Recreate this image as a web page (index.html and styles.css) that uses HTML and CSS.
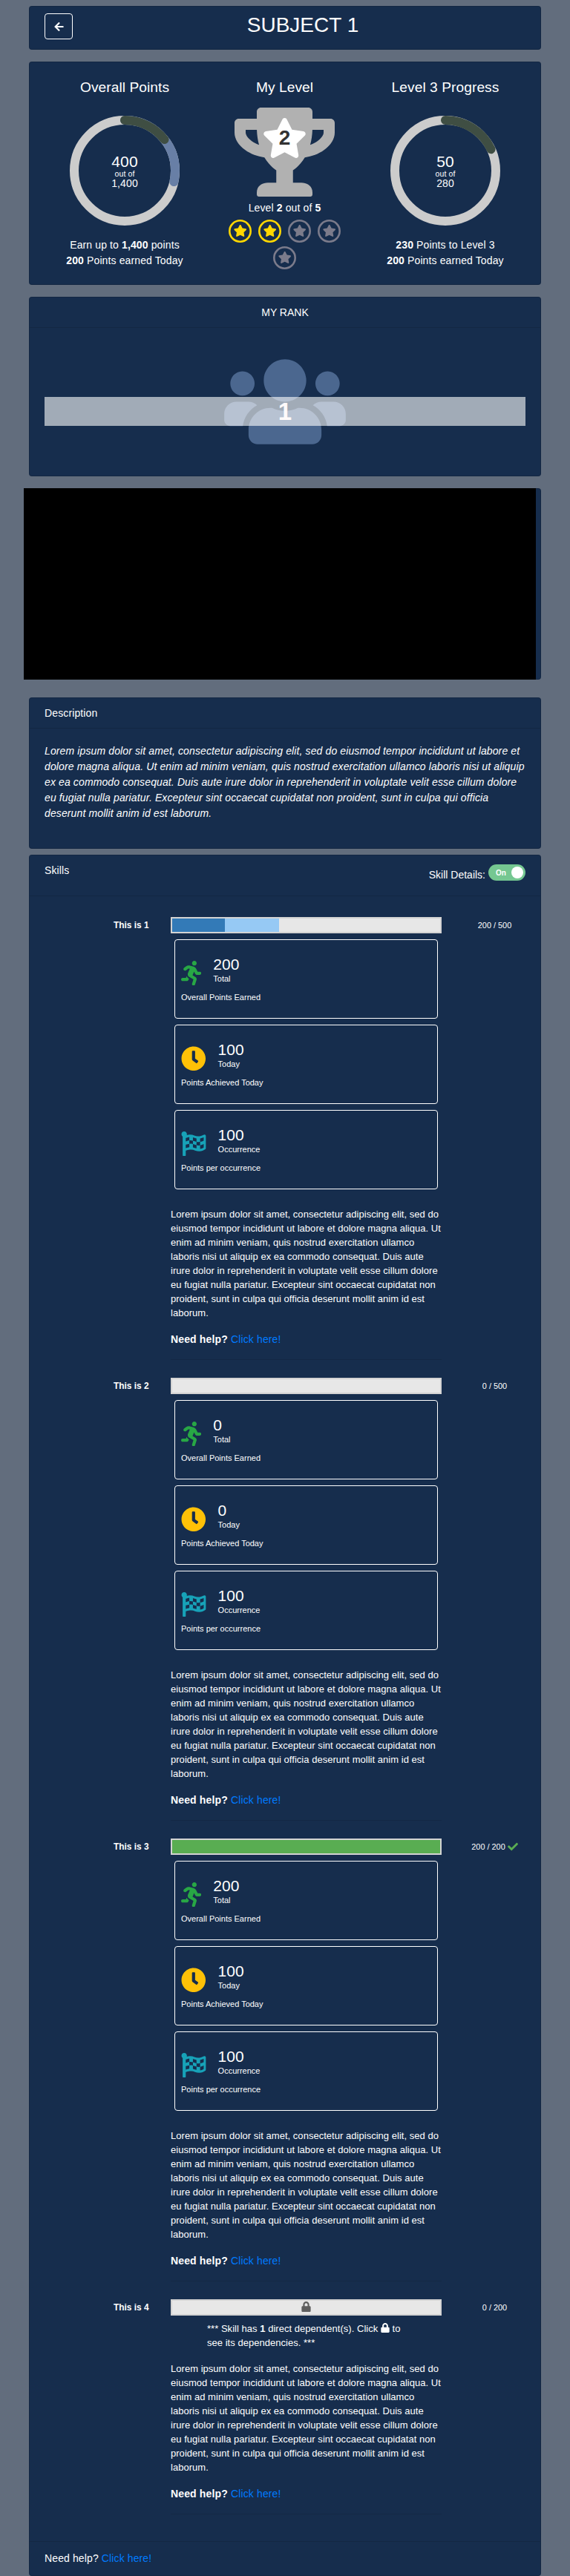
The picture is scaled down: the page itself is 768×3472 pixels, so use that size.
FILE: index.html
```html
<!DOCTYPE html>
<html lang="en">
<head>
<meta charset="utf-8">
<title>Subject 1</title>
<link rel="stylesheet" href="styles.css">
</head>
<body>
<svg class="sprite" xmlns="http://www.w3.org/2000/svg">
  <symbol id="arrow" viewBox="0 0 448 512"><path d="M257.5 445.1l-22.2 22.2c-9.4 9.4-24.6 9.4-33.9 0L7 273c-9.4-9.4-9.4-24.6 0-33.9L201.4 44.7c9.4-9.4 24.6-9.4 33.9 0l22.2 22.2c9.5 9.5 9.3 25-.4 34.3L136.6 216H424c13.3 0 24 10.7 24 24v32c0 13.3-10.7 24-24 24H136.6l120.5 114.8c9.8 9.3 10 24.8.4 34.3z"/></symbol>
  <symbol id="trophy" viewBox="0 0 576 512"><path d="M552 64H448V24c0-13.3-10.7-24-24-24H152c-13.3 0-24 10.7-24 24v40H24C10.7 64 0 74.7 0 88v56c0 35.7 22.5 72.4 61.9 100.7 31.5 22.7 69.8 37.1 110 41.7C203.3 338.5 240 360 240 360v72h-48c-35.3 0-64 20.7-64 56v12c0 6.6 5.4 12 12 12h296c6.600 0 12-5.400 12-12v-12c0-35.300-28.700-56-64-56h-48v-72s36.700-21.500 68.100-73.600c40.300-4.600 78.600-19 110-41.700 39.300-28.300 61.900-65 61.900-100.700V88c0-13.300-10.700-24-24-24zM99.300 192.800C74.900 175.200 64 155.600 64 144v-16h64.200c1 32.600 5.800 61.200 12.800 86.200-15.100-5.200-29.200-12.400-41.700-21.400zM512 144c0 16.100-17.700 36.100-35.300 48.800-12.500 9-26.700 16.200-41.800 21.400 7-25 11.800-53.600 12.800-86.200H512v16z"/></symbol>
  <symbol id="star" viewBox="0 0 576 512"><path d="M259.3 17.8L194 150.2 47.9 171.5c-26.2 3.8-36.7 36.1-17.7 54.6l105.7 103-25 145.5c-4.5 26.3 23.2 46 46.4 33.7L288 439.6l130.7 68.7c23.2 12.2 50.9-7.4 46.4-33.7l-25-145.5 105.7-103c19-18.5 8.5-50.8-17.7-54.6L382 150.2 316.7 17.8c-11.7-23.6-45.6-23.9-57.4 0z"/></symbol>
  <symbol id="badge" viewBox="0 0 31 31"><circle cx="15.500" cy="15.500" r="14.200" fill="none" stroke="currentColor" stroke-width="2.600"/><use href="#star" x="6.700" y="6.900" width="18" height="16"/></symbol>
  <symbol id="users" viewBox="0 0 640 512"><path d="M96 224c35.3 0 64-28.7 64-64s-28.7-64-64-64-64 28.7-64 64 28.7 64 64 64zm448 0c35.3 0 64-28.7 64-64s-28.7-64-64-64-64 28.7-64 64 28.7 64 64 64zm32 32h-64c-17.6 0-33.5 7.1-45.1 18.6 40.3 22.1 68.9 62 75.1 109.4h66c17.7 0 32-14.3 32-32v-32c0-35.3-28.7-64-64-64zm-256 0c61.9 0 112-50.1 112-112S381.9 32 320 32 208 82.1 208 144s50.1 112 112 112zm76.8 32h-8.3c-20.8 10-43.9 16-68.5 16s-47.6-6-68.5-16h-8.3C179.6 288 128 339.6 128 403.2V432c0 26.5 21.5 48 48 48h288c26.5 0 48-21.5 48-48v-28.8c0-63.6-51.6-115.2-115.2-115.2zm-223.7-13.4C161.5 263.1 145.6 256 128 256H64c-35.3 0-64 28.7-64 64v32c0 17.7 14.3 32 32 32h65.9c6.3-47.4 34.9-87.3 75.2-109.4z"/></symbol>
  <symbol id="run" viewBox="0 0 416 512"><path d="M272 96c26.51 0 48-21.49 48-48S298.51 0 272 0s-48 21.49-48 48 21.49 48 48 48zM113.69 317.47l-14.8 34.52H32c-17.67 0-32 14.33-32 32s14.33 32 32 32h77.45c19.25 0 36.58-11.44 44.11-29.09l8.79-20.52-10.67-6.3c-17.32-10.23-30.06-25.37-37.99-42.61zM384 223.99h-44.03l-26.06-53.25c-12.5-25.55-35.45-44.23-61.78-50.94l-71.08-21.14c-28.3-6.8-57.77-.55-80.84 17.14l-39.67 30.41c-14.03 10.75-16.69 30.83-5.94 44.86s30.84 16.69 44.86 5.94l39.66-30.41c7.67-5.89 17.44-8 25.27-6.14l14.7 4.37-37.46 87.39c-12.62 29.48-1.31 64.01 26.3 80.31l84.98 50.17-27.47 87.73c-5.28 16.86 4.11 34.82 20.97 40.09 3.19 1 6.41 1.48 9.58 1.48 13.61 0 26.23-8.77 30.52-22.45l31.64-101.06c5.91-20.77-2.89-43.08-21.64-54.39l-61.24-36.14 31.31-78.28 20.27 41.43c8 16.34 24.92 26.89 43.11 26.89H384c17.67 0 32-14.33 32-32s-14.33-31.99-32-31.99z"/></symbol>
  <symbol id="clock" viewBox="0 0 512 512"><path d="M256,8C119,8,8,119,8,256S119,504,256,504,504,393,504,256,393,8,256,8Zm92.49,313h0l-20,25a16,16,0,0,1-22.49,2.5h0l-67-49.72a40,40,0,0,1-15-31.23V112a16,16,0,0,1,16-16h32a16,16,0,0,1,16,16V256l58,42.5A16,16,0,0,1,348.49,321Z"/></symbol>
  <symbol id="flag" viewBox="0 0 512 512"><path d="M243.2 189.9V258c26.1 5.9 49.3 15.6 73.6 22.3v-68.2c-26-5.8-49.4-15.500-73.6-22.2zm223.3-123c-34.3 15.9-76.5 31.9-117 31.9C296 98.8 251.7 64 184.3 64c-25 0-47.3 4.4-68 12 2.8-7.3 4.1-15.2 3.6-23.6C118.1 24 94.8 1.2 66.3 0 34.3-1.3 8 24.3 8 56c0 19 9.5 35.8 24 45.9V488c0 13.3 10.7 24 24 24h16c13.3 0 24-10.7 24-24v-94.4c28.3-12.1 63.6-22.1 114.4-22.1 53.6 0 97.8 34.8 165.2 34.8 48.2 0 86.7-16.3 122.5-40.9 8.7-6 13.8-15.8 13.8-26.4V95.9c.1-23.3-24.2-38.8-45.4-29zM169.6 325.5c-25.8 2.7-50 8.2-73.6 16.6v-70.5c26.2-9.3 47.5-15 73.6-17.4v71.3zM464 191c-23.6 9.8-46.3 19.5-73.6 23.9V286c24.8-3.4 51.4-11.8 73.6-26v70.5c-25.1 16.1-48.5 24.7-73.6 27.1V286c-27 3.7-47.9 1.5-73.6-5.6v67.4c-23.9-7.4-47.3-16.7-73.6-21.3V258c-19.7-4.4-40.8-6.8-73.6-3.8v-70c-22.4 3.1-44.6 10.2-73.6 20.9v-70.5c33.2-12.2 50.1-19.8 73.6-22v71.6c27-3.7 48.4-1.3 73.6 5.700v-67.4c23.7 7.4 47.2 16.7 73.6 21.3v68.4c23.7 5.3 47.6 6.9 73.6 2.7V143c27-4.8 52.3-13.6 73.6-22.5z"/></symbol>
  <symbol id="lock" viewBox="0 0 448 512"><path d="M400 224h-24v-72C376 68.2 307.8 0 224 0S72 68.2 72 152v72H48c-26.5 0-48 21.5-48 48v192c0 26.5 21.5 48 48 48h352c26.5 0 48-21.5 48-48V272c0-26.5-21.5-48-48-48zm-104 0H152v-72c0-39.7 32.3-72 72-72s72 32.3 72 72v72z"/></symbol>
  <symbol id="check" viewBox="0 0 512 512"><path d="M173.898 439.404l-166.4-166.4c-9.997-9.997-9.997-26.206 0-36.204l36.203-36.204c9.997-9.998 26.207-9.998 36.204 0L192 312.69 432.095 72.596c9.997-9.997 26.207-9.997 36.204 0l36.203 36.204c9.997 9.997 9.997 26.206 0 36.204l-294.4 294.401c-9.998 9.997-26.207 9.997-36.204-.001z"/></symbol>
</svg>

<main class="page">
  <header class="card title-bar">
    <button class="back" aria-label="Back"><svg><use href="#arrow"/></svg></button>
    <h1>SUBJECT 1</h1>
  </header>

  <section class="card overview">
    <div class="metric">
      <h2>Overall Points</h2>
      <div class="ring">
        <svg viewBox="0 0 148 148">
          <circle class="track" cx="74" cy="74" r="68"/>
          <circle class="arc arc-total" cx="74" cy="74" r="68" pathLength="1400" stroke-dasharray="400 1400"/>
          <circle class="arc arc-today" cx="74" cy="74" r="68" pathLength="1400" stroke-dasharray="202 1400"/>
        </svg>
        <div class="ring-text"><span class="big">400</span><span class="small">out of</span><span class="of">1,400</span></div>
      </div>
      <div class="notes">Earn up to <b>1,400</b> points<br><b>200</b> Points earned Today</div>
    </div>
    <div class="metric my-level">
      <h2>My Level</h2>
      <div class="trophy">
        <svg class="cup"><use href="#trophy"/></svg>
        <svg class="cup-star"><use href="#star"/></svg>
        <span class="cup-level">2</span>
      </div>
      <div class="level">Level <b>2</b> out of <b>5</b></div>
      <div class="badges">
        <svg class="earned"><use href="#badge"/></svg>
        <svg class="earned"><use href="#badge"/></svg>
        <svg><use href="#badge"/></svg>
        <svg><use href="#badge"/></svg>
        <svg><use href="#badge"/></svg>
      </div>
    </div>
    <div class="metric">
      <h2>Level 3 Progress</h2>
      <div class="ring">
        <svg viewBox="0 0 148 148">
          <circle class="track" cx="74" cy="74" r="68"/>
          <circle class="arc arc-today" cx="74" cy="74" r="68" pathLength="280" stroke-dasharray="50.5 280"/>
        </svg>
        <div class="ring-text"><span class="big">50</span><span class="small">out of</span><span class="of">280</span></div>
      </div>
      <div class="notes"><b>230</b> Points to Level 3<br><b>200</b> Points earned Today</div>
    </div>
  </section>

  <section class="card rank">
    <div class="card-header centered">MY RANK</div>
    <div class="rank-body">
      <svg><use href="#users"/></svg>
      <div class="rank-band">1</div>
    </div>
  </section>

  <section class="card chart"><div class="chart-canvas"></div></section>

  <section class="card description">
    <div class="card-header">Description</div>
    <p>Lorem ipsum dolor sit amet, consectetur adipiscing elit, sed do eiusmod tempor incididunt ut labore et dolore magna aliqua. Ut enim ad minim veniam, quis nostrud exercitation ullamco laboris nisi ut aliquip ex ea commodo consequat. Duis aute irure dolor in reprehenderit in voluptate velit esse cillum dolore eu fugiat nulla pariatur. Excepteur sint occaecat cupidatat non proident, sunt in culpa qui officia deserunt mollit anim id est laborum.</p>
  </section>

  <section class="card skills">
    <div class="card-header skills-header">
      <span>Skills</span>
      <div class="details">Skill Details: <span class="toggle">On<i></i></span></div>
    </div>
    <div class="skills-body">
      <article class="skill">
        <div class="name">This is 1</div>
        <div class="main">
          <div class="bar"><div class="fill today" style="width:71px"></div><div class="fill earlier" style="width:73px"></div></div>
          <div class="stats">
            <div class="stat"><div class="stat-top"><svg class="run"><use href="#run"/></svg><div><div class="num">200</div><div class="unit">Total</div></div></div><div class="caption">Overall Points Earned</div></div>
            <div class="stat"><div class="stat-top"><svg class="clock"><use href="#clock"/></svg><div><div class="num">100</div><div class="unit">Today</div></div></div><div class="caption">Points Achieved Today</div></div>
            <div class="stat"><div class="stat-top"><svg class="flag"><use href="#flag"/></svg><div><div class="num">100</div><div class="unit">Occurrence</div></div></div><div class="caption">Points per occurrence</div></div>
          </div>
          <p class="text">Lorem ipsum dolor sit amet, consectetur adipiscing elit, sed do eiusmod tempor incididunt ut labore et dolore magna aliqua. Ut enim ad minim veniam, quis nostrud exercitation ullamco laboris nisi ut aliquip ex ea commodo consequat. Duis aute irure dolor in reprehenderit in voluptate velit esse cillum dolore eu fugiat nulla pariatur. Excepteur sint occaecat cupidatat non proident, sunt in culpa qui officia deserunt mollit anim id est laborum.</p>
          <div class="help"><b>Need help?</b> <a href="#">Click here!</a></div>
          <hr>
        </div>
        <div class="score">200 / 500</div>
      </article>

      <article class="skill">
        <div class="name">This is 2</div>
        <div class="main">
          <div class="bar"></div>
          <div class="stats">
            <div class="stat"><div class="stat-top"><svg class="run"><use href="#run"/></svg><div><div class="num">0</div><div class="unit">Total</div></div></div><div class="caption">Overall Points Earned</div></div>
            <div class="stat"><div class="stat-top"><svg class="clock"><use href="#clock"/></svg><div><div class="num">0</div><div class="unit">Today</div></div></div><div class="caption">Points Achieved Today</div></div>
            <div class="stat"><div class="stat-top"><svg class="flag"><use href="#flag"/></svg><div><div class="num">100</div><div class="unit">Occurrence</div></div></div><div class="caption">Points per occurrence</div></div>
          </div>
          <p class="text">Lorem ipsum dolor sit amet, consectetur adipiscing elit, sed do eiusmod tempor incididunt ut labore et dolore magna aliqua. Ut enim ad minim veniam, quis nostrud exercitation ullamco laboris nisi ut aliquip ex ea commodo consequat. Duis aute irure dolor in reprehenderit in voluptate velit esse cillum dolore eu fugiat nulla pariatur. Excepteur sint occaecat cupidatat non proident, sunt in culpa qui officia deserunt mollit anim id est laborum.</p>
          <div class="help"><b>Need help?</b> <a href="#">Click here!</a></div>
          <hr>
        </div>
        <div class="score">0 / 500</div>
      </article>

      <article class="skill">
        <div class="name">This is 3</div>
        <div class="main">
          <div class="bar"><div class="fill done" style="width:100%"></div></div>
          <div class="stats">
            <div class="stat"><div class="stat-top"><svg class="run"><use href="#run"/></svg><div><div class="num">200</div><div class="unit">Total</div></div></div><div class="caption">Overall Points Earned</div></div>
            <div class="stat"><div class="stat-top"><svg class="clock"><use href="#clock"/></svg><div><div class="num">100</div><div class="unit">Today</div></div></div><div class="caption">Points Achieved Today</div></div>
            <div class="stat"><div class="stat-top"><svg class="flag"><use href="#flag"/></svg><div><div class="num">100</div><div class="unit">Occurrence</div></div></div><div class="caption">Points per occurrence</div></div>
          </div>
          <p class="text">Lorem ipsum dolor sit amet, consectetur adipiscing elit, sed do eiusmod tempor incididunt ut labore et dolore magna aliqua. Ut enim ad minim veniam, quis nostrud exercitation ullamco laboris nisi ut aliquip ex ea commodo consequat. Duis aute irure dolor in reprehenderit in voluptate velit esse cillum dolore eu fugiat nulla pariatur. Excepteur sint occaecat cupidatat non proident, sunt in culpa qui officia deserunt mollit anim id est laborum.</p>
          <div class="help"><b>Need help?</b> <a href="#">Click here!</a></div>
          <hr>
        </div>
        <div class="score">200 / 200 <svg class="check"><use href="#check"/></svg></div>
      </article>

      <article class="skill">
        <div class="name">This is 4</div>
        <div class="main">
          <div class="bar locked"><svg><use href="#lock"/></svg></div>
          <div class="dependency">*** Skill has <b>1</b> direct dependent(s). Click <svg><use href="#lock"/></svg> to see its dependencies. ***</div>
          <p class="text">Lorem ipsum dolor sit amet, consectetur adipiscing elit, sed do eiusmod tempor incididunt ut labore et dolore magna aliqua. Ut enim ad minim veniam, quis nostrud exercitation ullamco laboris nisi ut aliquip ex ea commodo consequat. Duis aute irure dolor in reprehenderit in voluptate velit esse cillum dolore eu fugiat nulla pariatur. Excepteur sint occaecat cupidatat non proident, sunt in culpa qui officia deserunt mollit anim id est laborum.</p>
          <div class="help"><b>Need help?</b> <a href="#">Click here!</a></div>
          <hr>
        </div>
        <div class="score">0 / 200</div>
      </article>
    </div>
    <footer class="card-footer">Need help? <a href="#">Click here!</a></footer>
  </section>
</main>
</body>
</html>
```
FILE: styles.css
```css
* { box-sizing: border-box; }

body {
  margin: 0;
  background: #626d7d;
  color: #fff;
  font: 14px/21px "Liberation Sans", Arial, sans-serif;
  letter-spacing: .12px;
}

a { color: #007bff; text-decoration: none; }
svg { display: block; fill: currentColor; }
.sprite { position: absolute; width: 0; height: 0; }

.page {
  width: 690px;
  margin: 0 auto;
  padding-top: 8px;
  display: flex;
  flex-direction: column;
}

.card {
  background: #162d4d;
  border: 1px solid rgba(0, 0, 0, .125);
  border-radius: 4px;
  margin-bottom: 16px;
}
.card-header {
  height: 41px;
  padding: 10px 20px 0;
  border-bottom: 1px solid rgba(0, 0, 0, .125);
}
.centered { text-align: center; letter-spacing: 0; }

/* Title bar */
.title-bar { height: 59px; display: flex; padding: 9px 20px; }
.back {
  width: 38px;
  height: 35px;
  padding: 0;
  display: flex;
  align-items: center;
  justify-content: center;
  background: none;
  border: 1px solid #fff;
  border-radius: 4px;
  color: #fff;
}
.back svg { width: 13px; height: 14px; }
.title-bar h1 {
  flex: 1;
  margin: 0 0 0 10px;
  font-weight: 400;
  font-size: 28px;
  line-height: 31px;
  letter-spacing: 0;
  text-align: center;
}

/* Overview */
.overview {
  height: 301px;
  padding: 20px 20px 0;
  display: grid;
  grid-template-columns: repeat(3, 1fr);
  text-align: center;
}
.my-level { padding-right: 1px; }
.metric h2 {
  margin: 0;
  padding-top: 2px;
  height: 41px;
  font-size: 19.2px;
  font-weight: 400;
  line-height: 24px;
  letter-spacing: .05px;
}
.ring { position: relative; width: 148px; height: 148px; margin: 11px auto 0; }
.ring circle { fill: none; stroke-width: 12; }
.ring svg { transform: rotate(-90deg); }
.ring .track { stroke: #ccc; }
.arc { stroke-linecap: round; }
.arc-total { stroke: #687fa6; }
.arc-today { stroke: #3f4e43; }
.ring-text {
  position: absolute;
  inset: 0;
  padding-top: 50px;
  display: flex;
  flex-direction: column;
}
.big { font-size: 21px; line-height: 23px; }
.small { font-size: 10.5px; line-height: 11px; }
.of { line-height: 15px; }
.notes { margin-top: 16px; }

.trophy { position: relative; width: 135px; height: 120px; margin: 0 auto; color: #b1b1b1; }
.cup { width: 135px; height: 120px; }
.cup-star { position: absolute; left: 37px; top: 14px; width: 61px; height: 54px; color: #fff; }
.cup-level {
  position: absolute;
  left: 0;
  right: 0;
  top: 24px;
  font-size: 28px;
  font-weight: 700;
  line-height: 34px;
  color: #333;
}
.level { margin-top: 5px; }
.badges {
  width: 161px;
  margin: 5px auto 0;
  display: flex;
  flex-wrap: wrap;
  justify-content: center;
  gap: 5px 9px;
  color: #7b7b8b;
}
.badges svg { width: 31px; height: 31px; }
.badges .earned { color: gold; }

/* Rank */
.rank { height: 242px; }
.rank-body { position: relative; padding: 34px 20px 0; }
.rank-body svg { width: 164px; height: 131px; margin: 0 auto; color: #4b678f; }
.rank-band {
  position: absolute;
  left: 20px;
  right: 20px;
  top: 93px;
  height: 39px;
  background: rgba(255, 255, 255, .6);
  color: #fffafa;
  font-size: 33px;
  font-weight: 700;
  line-height: 39px;
  text-align: center;
}

/* Chart */
.chart { height: 258px; margin-bottom: 24px; }
.chart-canvas { width: 690px; height: 258px; margin: -1px 0 0 -8px; background: #000; }

/* Description */
.description { height: 204px; margin-bottom: 8px; }
.description p { margin: 20px 0 0 20px; width: 650px; font-style: italic; }

/* Skills */
.skills { height: 2320px; margin-bottom: 0; display: flex; flex-direction: column; }
.skills-header { height: 55px; display: flex; justify-content: space-between; }
.details { display: flex; gap: 4px; padding-top: 6px; letter-spacing: 0; }
.toggle {
  width: 50px;
  height: 22px;
  margin-top: -4px;
  padding: 0 3px 0 10px;
  display: flex;
  align-items: center;
  justify-content: space-between;
  background: #75c791;
  border-radius: 11px;
  font-size: 10px;
  font-weight: 700;
}
.toggle i { width: 16px; height: 16px; border-radius: 50%; background: #fff; }

.skills-body { flex: 1; padding: 28px 20px 0; }
.skill { display: grid; grid-template-columns: 170px 365px 113px; letter-spacing: 0; }
.name { padding-left: 93px; font-size: 11.9px; font-weight: 700; line-height: 22px; }
.score {
  height: 22px;
  padding-left: 30px;
  display: flex;
  justify-content: center;
  align-items: center;
  gap: 3px;
  font-size: 10.9px;
  white-space: nowrap;
}
.check { width: 14px; height: 14px; color: #5aad52; }

.bar { height: 22px; display: flex; background: #e7e7e7; border: 2px solid #d3d3d3; }
.fill { height: 18px; }
.today { background: #337ab7; }
.earlier { background: #96c9f4; }
.done { background: #59ad52; }
.locked { justify-content: center; color: #5f5f5f; }
.locked svg { width: 13px; height: 14px; margin-top: 1px; }

.stats { display: grid; gap: 8px; margin: 8px 5px 0; }
.stat { height: 107px; padding: 22px 8px 0; border: 1px solid #fff; border-radius: 4px; font-size: 11px; }
.stat-top { display: flex; gap: 16px; height: 45px; }
.stat-top svg { height: 33.6px; margin-top: 5.5px; }
.run { width: 27.3px; color: #28a745; }
.clock { width: 33.6px; color: #ffc107; }
.flag { width: 33.6px; color: #17a2b8; }
.num { margin-bottom: 2px; font-size: 21px; line-height: 21px; }
.unit { line-height: 15px; }
.caption { line-height: 21px; }

.text { width: 366px; margin: 24px 0 16px; font-size: 13px; line-height: 19px; letter-spacing: .03px; }
.help { letter-spacing: .14px; }
hr { height: 1px; margin: 16px 0 24px; border: 0; background: rgba(0, 0, 0, .1); }
.dependency { width: 275px; margin: 8px 0 16px 49px; font-size: 13px; line-height: 19px; letter-spacing: .03px; }
.dependency svg { display: inline-block; width: 12px; height: 13px; vertical-align: -1px; }
.dependency + .text { margin-top: 16px; }
.card-footer { height: 46px; padding: 12px 20px 0; border-top: 1px solid rgba(0, 0, 0, .125); }
```
